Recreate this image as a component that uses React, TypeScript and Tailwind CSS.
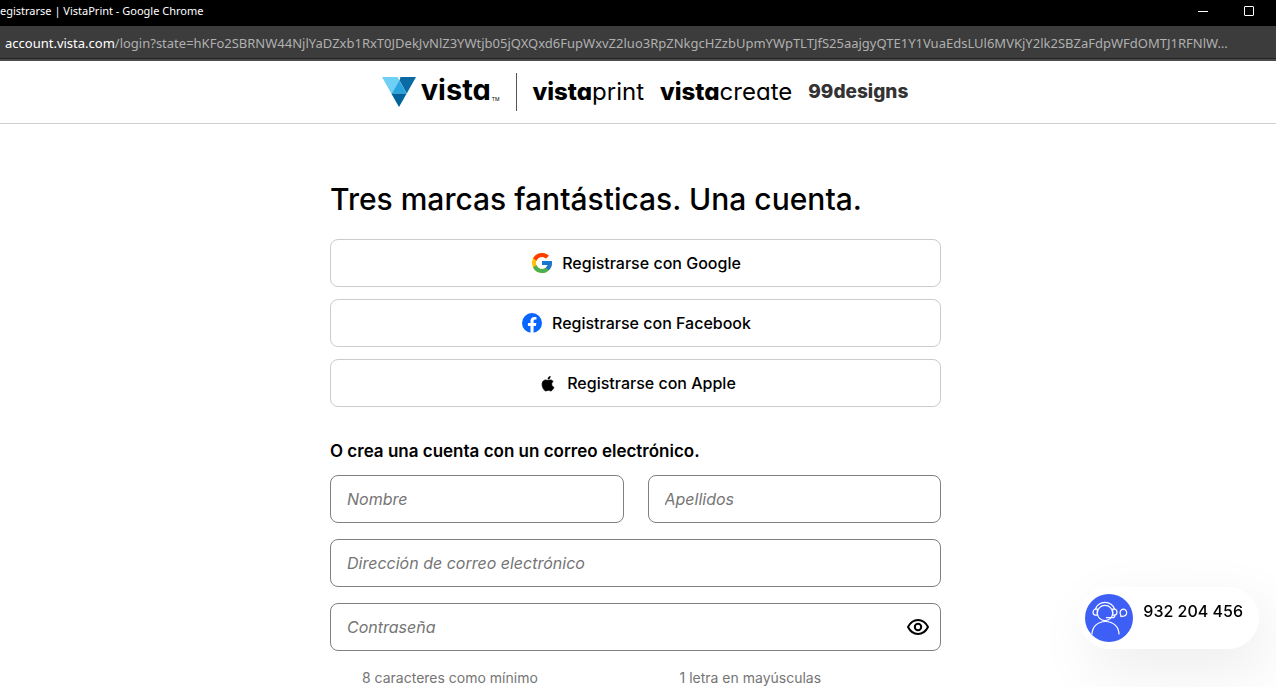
import * as React from 'react';

const URL_PATH =
  '/login?state=hKFo2SBRNW44NjlYaDZxb1RxT0JDekJvNlZ3YWtjb05jQXQxd6FupWxvZ2luo3RpZNkgcHZzbUpmYWpTLTJfS25aajgyQTE1Y1VuaEdsLUl6MVKjY2lk2SBZaFdpWFdOMTJ1RFNlW…';

const VistaMark = () => (
  <svg width="34" height="30" viewBox="0 0 34 30" aria-hidden="true">
    <path d="M0 0h15.5l2 3.5L10.8 16.5H9.3z" fill="#6fd0f6" />
    <path d="M18.5 0H34l-9.3 16.5L17.5 3.5z" fill="#0a6aa3" />
    <path d="M17.3 3.5l7.4 13H10z" fill="#2aa4df" />
    <path d="M9.3 16.5h15.4L17 30z" fill="#00639b" />
  </svg>
);

const GoogleIcon = () => (
  <svg width="20" height="20" viewBox="4 4 40 40" aria-hidden="true">
    <path fill="#FFC107" d="M43.611 20.083H42V20H24v8h11.303c-1.649 4.657-6.08 8-11.303 8-6.627 0-12-5.373-12-12s5.373-12 12-12c3.059 0 5.842 1.154 7.961 3.039l5.657-5.657C34.046 6.053 29.268 4 24 4 12.955 4 4 12.955 4 24s8.955 20 20 20 20-8.955 20-20c0-1.341-.138-2.65-.389-3.917z" />
    <path fill="#FF3D00" d="M6.306 14.691l6.571 4.819C14.655 15.108 18.961 12 24 12c3.059 0 5.842 1.154 7.961 3.039l5.657-5.657C34.046 6.053 29.268 4 24 4 16.318 4 9.656 8.337 6.306 14.691z" />
    <path fill="#4CAF50" d="M24 44c5.166 0 9.86-1.977 13.409-5.192l-6.19-5.238A11.91 11.91 0 0 1 24 36c-5.202 0-9.619-3.317-11.283-7.946l-6.522 5.025C9.505 39.556 16.227 44 24 44z" />
    <path fill="#1976D2" d="M43.611 20.083H42V20H24v8h11.303a12.04 12.04 0 0 1-4.087 5.571l6.19 5.238C36.971 39.205 44 34 44 24c0-1.341-.138-2.65-.389-3.917z" />
  </svg>
);

const FacebookIcon = () => (
  <svg width="20" height="20" viewBox="0 0 24 24" aria-hidden="true">
    <circle cx="12" cy="12" r="12" fill="#0866ff" />
    <path fill="#fff" d="M16.7 15.5l.5-3.5h-3.3V9.8c0-1 .5-1.9 2-1.9h1.5V5s-1.4-.2-2.7-.2c-2.7 0-4.5 1.6-4.5 4.6V12H7.1v3.5h3.1v8.4a12 12 0 0 0 3.7 0v-8.4z" />
  </svg>
);

const AppleIcon = () => (
  <svg width="20" height="17" viewBox="-4 0 20 17" aria-hidden="true">
    <path d="M11.6 9c0-1.7 1.4-2.5 1.5-2.6-.8-1.2-2.1-1.4-2.5-1.4-1.1-.1-2.1.6-2.6.6-.6 0-1.4-.6-2.3-.6C4.5 5 3.4 5.7 2.7 6.8c-1.3 2.2-.3 5.5.9 7.3.6.9 1.4 1.9 2.3 1.8.9 0 1.3-.6 2.4-.6s1.4.6 2.4.6 1.6-.9 2.2-1.7c.7-1 1-2 1-2-.1-.1-2.3-.8-2.3-3.2z" transform="translate(-1 0)" stroke="#000" strokeWidth="0.8" />
    <path d="M8.9 3.4c.5-.6.8-1.5.7-2.4-.7 0-1.6.5-2.1 1.1-.5.5-.9 1.4-.8 2.3.8.1 1.7-.4 2.2-1z" />
  </svg>
);

const EyeIcon = () => (
  <svg width="22" height="16" viewBox="0 0 22 16" fill="none" stroke="#000" strokeWidth="2" aria-hidden="true">
    <path d="M1 8c2.3-4.5 5.8-7 10-7s7.7 2.5 10 7c-2.3 4.5-5.8 7-10 7S3.3 12.5 1 8z" strokeLinejoin="round" />
    <circle cx="11" cy="8" r="3.2" />
  </svg>
);

const AgentIcon = () => (
  <svg width="48" height="48" viewBox="0 0 48 48" fill="none" stroke="#fff" strokeWidth="1.2" aria-hidden="true">
    <circle cx="24" cy="24" r="24" fill="#3e5ff5" stroke="none" />
    <circle cx="20" cy="19" r="7.7" />
    <path d="M10.5 15c1-4 5-6.7 9.5-6.7s8.5 2.7 9.5 6.7" />
    <path d="M12.3 15.2h-1.5a2.3 2.5 0 0 0 0 6h1.5zM27.7 15.2h1.5a2.3 2.5 0 0 1 0 6h-1.5zM30 21.2c0 1.8-1.3 2.5-3 2.5h-6" />
    <path d="M7 40.5C7 33 12.5 27.5 20.5 27.5S34 33 34 40.5" />
    <path d="M36 22.6l-.4-2a3.3 3.5 0 1 1 2.3 1.6z" />
  </svg>
);

interface SocialButtonProps {
  icon: React.ReactNode;
  label: string;
}

const SocialButton = ({ icon, label }: SocialButtonProps) => (
  <button type="button" className="flex h-12 w-full items-center justify-center gap-[10px] rounded-lg border border-[#cccccc] bg-white pl-0.5 text-base font-medium">
    {icon}
    <span>{label}</span>
  </button>
);

interface FieldProps {
  id: string;
  label: string;
  type?: string;
}

const Field = ({ id, label, type = 'text' }: FieldProps) => (
  <div className="min-w-0 flex-1">
    <input
      id={id}
      type={type}
      aria-label={label}
      placeholder={label}
      className="block h-12 w-full rounded-lg border border-[#808080] bg-white px-4 text-base placeholder:text-[#757575] placeholder:italic"
    />
  </div>
);

export default function App() {
  return (
    <div className="h-screen overflow-hidden bg-white font-['Inter',sans-serif] text-black">
      <div className="flex h-[26px] items-center justify-between bg-black pr-[22px] font-['Noto_Sans',sans-serif] text-[11px] leading-4 text-white">
        <span className="pb-1">egistrarse | VistaPrint - Google Chrome</span>
        <div className="flex items-center gap-9 pb-1">
          <button type="button" aria-label="Minimizar" className="flex h-[10px] w-[10px] items-center">
            <span className="h-px w-full bg-white" />
          </button>
          <button type="button" aria-label="Maximizar" className="h-[10px] w-[10px] rounded-[1px] border border-white" />
        </div>
      </div>
      <div className="h-[33px] border-b border-[#222222] bg-[#3c3c3c] pl-[5px] font-['Noto_Sans',sans-serif] text-[13px] leading-[34px] text-[#b0b0b0]">
        <p className="whitespace-nowrap"><span className="text-white">account.vista.com</span>{URL_PATH}</p>
      </div>
      <div className="h-0.5 bg-[#4c4c4c]" />

      <header className="flex h-[63px] items-center justify-center border-b border-[#cfcfcf] pl-[14px] [font-feature-settings:'cv11','ss03']">
        <div className="flex items-center">
          <VistaMark />
          <span className="pb-1 pl-[5px] text-[29px] leading-8 font-bold">vista</span>
          <span className="self-end pb-2 pl-px text-[5px] leading-none">TM</span>
        </div>
        <div className="mx-4 h-[38px] w-px bg-[#555555]" />
        <div className="flex items-center gap-4 text-[24px] leading-8">
          <span><b className="font-extrabold">vista</b>print</span>
          <span><b className="font-extrabold">vista</b>create</span>
          <span className="text-[19px] font-extrabold text-[#333333]">99designs</span>
        </div>
      </header>

      <main className="mx-auto w-[616px] max-w-full pt-[55px] pr-[5px]">
        <h1 className="text-[30px] leading-10 font-medium">Tres marcas fantásticas. Una cuenta.</h1>
        <div className="mt-5 flex flex-col gap-3">
          <SocialButton icon={<GoogleIcon />} label="Registrarse con Google" />
          <SocialButton icon={<FacebookIcon />} label="Registrarse con Facebook" />
          <SocialButton icon={<AppleIcon />} label="Registrarse con Apple" />
        </div>
        <form>
          <h2 className="mt-8 text-[17px] leading-6 font-semibold">O crea una cuenta con un correo electrónico.</h2>
          <div className="mt-3 flex flex-col gap-4">
            <div className="flex gap-6">
              <Field id="nombre" label="Nombre" />
              <Field id="apellidos" label="Apellidos" />
            </div>
            <div className="flex">
              <Field id="correo" label="Dirección de correo electrónico" type="email" />
            </div>
            <div className="relative flex">
              <Field id="clave" label="Contraseña" type="password" />
              <button type="button" aria-label="Mostrar contraseña" className="absolute top-4 right-3">
                <EyeIcon />
              </button>
            </div>
          </div>
          <ul className="mt-4 grid grid-cols-2 gap-6 pl-8 text-[14px] leading-[22px] text-[#757575]">
            <li>8 caracteres como mínimo</li>
            <li className="pl-4">1 letra en mayúsculas</li>
          </ul>
        </form>
      </main>

      <a href="tel:932204456" className="fixed right-[17px] bottom-[38px] flex h-[62px] items-center gap-[10px] rounded-full bg-white pr-4 pl-[6px] text-base font-medium shadow-[10px_20px_60px_rgba(0,0,0,0.08)]">
        <AgentIcon />
        <span className="pb-[14px]">932 204 456</span>
      </a>
    </div>
  );
}
